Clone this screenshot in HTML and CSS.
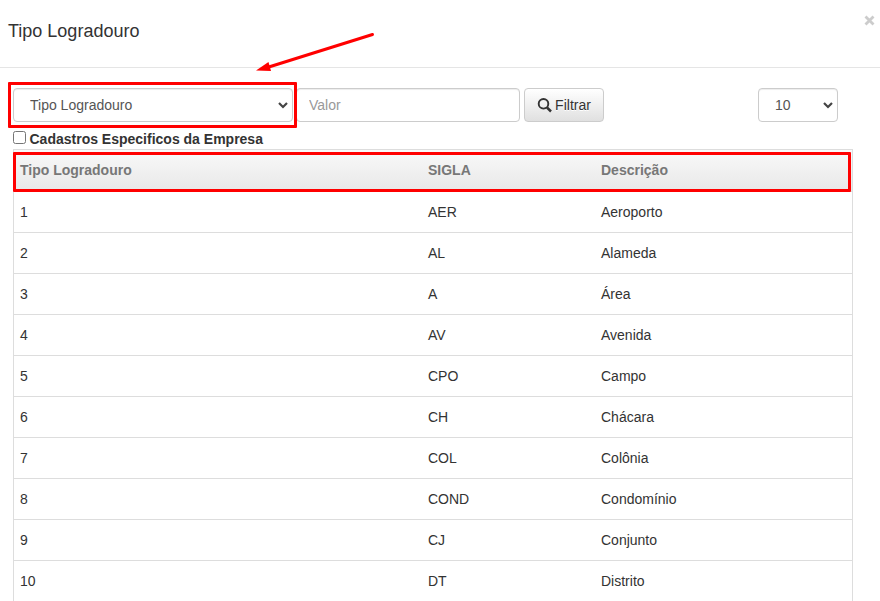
FILE: index.html
```html
<!DOCTYPE html>
<html lang="pt-BR">
<head>
<meta charset="utf-8">
<title>Tipo Logradouro</title>
<link rel="stylesheet" href="styles.css">
</head>
<body>
<div class="modal">
  <header class="modal-header">
    <h1>Tipo Logradouro</h1>
    <button class="close" aria-label="Fechar"><svg width="11" height="11" viewBox="0 0 11 11"><path d="M1.500 1.500l8 8M9.500 1.500l-8 8" stroke="#ccc" stroke-width="2.8"/></svg></button>
  </header>
  <div class="filters">
    <div class="select field-select">
      <select><option>Tipo Logradouro</option></select>
      <svg class="chevron" width="10" height="7" viewBox="0 0 10 7"><path d="M1 1l4 4 4-4" fill="none" stroke="#444" stroke-width="2.2"/></svg>
      <span class="mark mark-select"></span>
    </div>
    <input class="value" type="text" placeholder="Valor">
    <button class="btn"><svg width="15" height="15" viewBox="0 0 15 15"><circle cx="6.500" cy="5.800" r="4.800" fill="none" stroke="#333" stroke-width="1.9"/><path d="M10 9.500l4 4" stroke="#333" stroke-width="2.5"/></svg><span>Filtrar</span></button>
    <div class="select page-size">
      <select><option>10</option></select>
      <svg class="chevron" width="10" height="7" viewBox="0 0 10 7"><path d="M1 1l4 4 4-4" fill="none" stroke="#444" stroke-width="2.2"/></svg>
    </div>
  </div>
  <label class="company"><input type="checkbox"><span>Cadastros Especificos da Empresa</span></label>
  <div class="grid">
    <div class="row head"><span>Tipo Logradouro</span><span>SIGLA</span><span>Descrição</span><i class="mark mark-head"></i></div>
    <div class="row"><span>1</span><span>AER</span><span>Aeroporto</span></div>
    <div class="row"><span>2</span><span>AL</span><span>Alameda</span></div>
    <div class="row"><span>3</span><span>A</span><span>Área</span></div>
    <div class="row"><span>4</span><span>AV</span><span>Avenida</span></div>
    <div class="row"><span>5</span><span>CPO</span><span>Campo</span></div>
    <div class="row"><span>6</span><span>CH</span><span>Chácara</span></div>
    <div class="row"><span>7</span><span>COL</span><span>Colônia</span></div>
    <div class="row"><span>8</span><span>COND</span><span>Condomínio</span></div>
    <div class="row"><span>9</span><span>CJ</span><span>Conjunto</span></div>
    <div class="row"><span>10</span><span>DT</span><span>Distrito</span></div>
  </div>
  <svg class="arrow" width="124" height="42" viewBox="0 0 124 42"><path d="M116.500 3.500L12 36.300" stroke="#f00" stroke-width="3" stroke-linecap="round"/><path d="M0 39.500L12.500 31l2.500 9z" fill="#f00"/></svg>
</div>
</body>
</html>
```
FILE: styles.css
```css
* { box-sizing: border-box; }
body { margin: 0; background: #fff; color: #333; font: 14px/20px "Liberation Sans", Arial, sans-serif; }
.modal { position: relative; height: 601px; overflow: hidden; }
.modal-header { display: flex; justify-content: space-between; height: 68px; padding: 15px 5px 0 8px; border-bottom: 1px solid #e5e5e5; }
h1 { margin: 0; font-size: 18px; font-weight: 400; line-height: 32px; }
.close { width: 11px; height: 11px; padding: 0; border: 0; background: none; }
.close svg { display: block; }
.filters { display: flex; padding: 20px 42px 0 13px; height: 61px; }
.select { position: relative; height: 34px; }
.select select { appearance: none; width: 100%; height: 34px; padding: 0 16px; border: 1px solid #ccc; border-radius: 4px; background: #fff; color: #555; font: inherit; box-shadow: inset 0 1px 1px rgba(0,0,0,.075); }
.field-select { width: 280px; }
.page-size { width: 80px; margin-left: auto; }
.chevron { position: absolute; right: 5px; top: 14px; }
.value { width: 224px; height: 34px; margin: 0 4px 0 3px; padding: 0 12px; border: 1px solid #ccc; border-radius: 4px; color: #555; font: inherit; box-shadow: inset 0 1px 1px rgba(0,0,0,.075); }
.value::placeholder { color: #999; opacity: 1; }
.btn { display: flex; align-items: center; justify-content: center; gap: 3px; width: 80px; height: 34px; padding: 0; border: 1px solid #ccc; border-radius: 4px; background: linear-gradient(#fff, #e0e0e0); color: #333; font: inherit; text-shadow: 0 1px 0 #fff; }
.company { display: flex; height: 20px; padding-left: 13px; font-weight: 700; }
.company input { width: 13px; height: 13px; margin: 2px 3.5px 0 0; }
.grid { width: 840px; margin-left: 13px; border: 1px solid #ddd; }
.row { display: grid; grid-template-columns: 408px 173px 1fr; height: 41px; padding: 0 6px; line-height: 40px; border-bottom: 1px solid #ddd; }
.head { position: relative; height: 42px; background: linear-gradient(#f9f9f9, #e8e8e8); color: #777; font-weight: 700; }
.mark { position: absolute; border: 3px solid #f00; border-radius: 1px; }
.mark-select { left: -5px; top: -6px; width: 289px; height: 46px; }
.mark-head { left: -1px; top: 2px; width: 838px; height: 40px; }
.arrow { position: absolute; left: 256px; top: 31px; }
```
